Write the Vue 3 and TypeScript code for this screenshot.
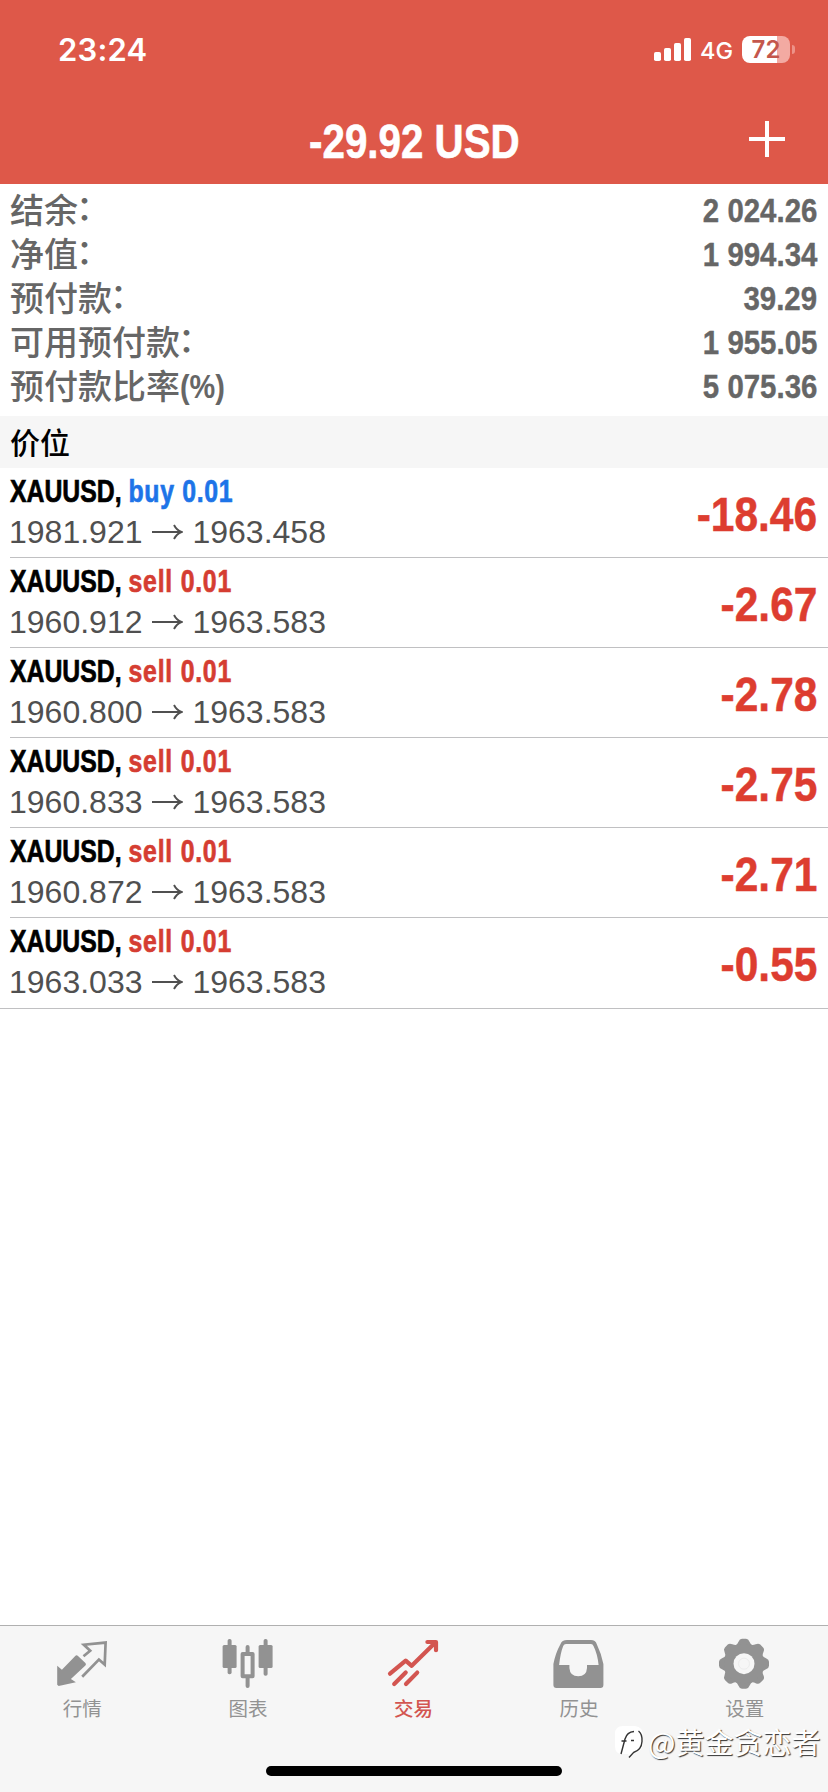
<script setup lang="ts">
interface Row { label: string; value: string; suffix?: string }
interface Position { side: 'buy' | 'sell'; open: string; current: string; profit: string }

const account: Row[] = [
  { label: '结余', suffix: '：', value: '2 024.26' },
  { label: '净值', suffix: '：', value: '1 994.34' },
  { label: '预付款', suffix: '：', value: '39.29' },
  { label: '可用预付款', suffix: '：', value: '1 955.05' },
  { label: '预付款比率', suffix: '(%)', value: '5 075.36' },
]

const positions: Position[] = [
  { side: 'buy', open: '1981.921', current: '1963.458', profit: '-18.46' },
  { side: 'sell', open: '1960.912', current: '1963.583', profit: '-2.67' },
  { side: 'sell', open: '1960.800', current: '1963.583', profit: '-2.78' },
  { side: 'sell', open: '1960.833', current: '1963.583', profit: '-2.75' },
  { side: 'sell', open: '1960.872', current: '1963.583', profit: '-2.71' },
  { side: 'sell', open: '1963.033', current: '1963.583', profit: '-0.55' },
]

const teeth = [0, 45, 90, 135, 180, 225, 270, 315]
</script>

<template>
  <div class="screen">
    <header class="top">
      <div class="status">
        <span class="time">23:24</span>
        <div class="indicators">
          <svg class="signal" width="38" height="24" viewBox="0 0 38 24" fill="#fff">
            <rect x="0" y="14" width="7" height="9" rx="1.8" />
            <rect x="10" y="10" width="7" height="13" rx="1.8" />
            <rect x="20" y="5" width="7" height="18" rx="1.8" />
            <rect x="30" y="0" width="7" height="23" rx="1.8" />
          </svg>
          <span class="network">4G</span>
          <div class="battery">72</div>
          <i class="cap"></i>
        </div>
      </div>
      <div class="bar">
        <h1 class="total">-29.92 USD</h1>
        <svg class="plus" width="36" height="36" viewBox="0 0 36 36" stroke="#fff" stroke-width="4">
          <path d="M0 18H36M18 0V36" />
        </svg>
      </div>
    </header>

    <section class="account">
      <div v-for="r in account" :key="r.label" class="line">
        <span class="label">{{ r.label }}<span :class="r.suffix === '：' ? 'colon' : 'suffix'">{{ r.suffix }}</span></span>
        <span class="value">{{ r.value }}</span>
      </div>
    </section>

    <h2 class="section">价位</h2>

    <ul class="positions">
      <li v-for="(p, i) in positions" :key="i" class="position">
        <div class="info">
          <div class="symbol">XAUUSD, <span :class="p.side">{{ p.side }} 0.01</span></div>
          <div class="prices">
            <span>{{ p.open }}</span>
            <svg class="arrow" width="32" height="16" viewBox="0 0 32 16" fill="none" stroke="#505050" stroke-width="1.9">
              <path d="M1 8H30M23 1Q25.500 6 30.500 8Q25.500 10 23 15" />
            </svg>
            <span>{{ p.current }}</span>
          </div>
        </div>
        <span class="profit">{{ p.profit }}</span>
      </li>
    </ul>

    <nav class="tabs">
      <div class="tab">
        <svg width="54" height="54" viewBox="0 0 54 54">
          <path fill="#929292" d="M1.2 29.7L5.9 33.7L19 20.3Q20.5 18.6 22 20L29.4 27Q30.6 28.2 29.4 29.4L14.9 43L19.9 46.3L2.7 50L1.2 48.7Z" />
          <path fill="none" stroke="#929292" stroke-width="2.7" d="M27.5 20.3L34.2 14.7L27.8 8.7L49.6 6.6L48.7 28.6L42.9 23.6L26.2 40.7" />
        </svg>
        <span>行情</span>
      </div>
      <div class="tab">
        <svg width="54" height="54" viewBox="0 0 54 54" fill="#929292">
          <rect x="1.6" y="9" width="14" height="23" rx="1.5" />
          <rect x="6.6" y="3" width="4" height="35.3" rx="1.8" />
          <rect x="21.6" y="18" width="10" height="22.3" fill="none" stroke="#929292" stroke-width="4" stroke-linejoin="round" />
          <path d="M26.6 11V17M26.6 41V50" stroke="#929292" stroke-width="4" stroke-linecap="round" />
          <rect x="37.6" y="9" width="14" height="23" rx="1.5" />
          <rect x="42.6" y="3" width="4" height="36.7" rx="1.8" />
        </svg>
        <span>图表</span>
      </div>
      <div class="tab active">
        <svg width="54" height="54" viewBox="0 0 54 54" fill="none" stroke="#d35550" stroke-width="4.2" stroke-linecap="round" stroke-linejoin="round">
          <path d="M3 37.7L18.7 24.6L24.7 29.8L48.6 6.3M40.4 6H49V14.2M7.2 48L18.7 36.6M19 48L30.2 36.6" />
        </svg>
        <span>交易</span>
      </div>
      <div class="tab">
        <svg width="54" height="54" viewBox="0 0 54 54">
          <path fill="#929292" fill-rule="evenodd" d="M14 4H38Q42.4 4 43.8 8.2Q48.5 18 50.4 28V49Q50.4 52 47.4 52H3.4Q.4 52 .4 49V28Q2.5 17 7.4 8.2Q9 4 14 4ZM13 8Q11 8 10.2 10Q7.4 17 6.1 29H16.4V32Q17 40.3 25.2 40.3Q33.5 40.3 34 32V29H45.6Q44.5 18 40.5 10Q39.8 8 38 8Z" />
        </svg>
        <span>历史</span>
      </div>
      <div class="tab">
        <svg width="54" height="54" viewBox="0 0 54 54">
          <g transform="translate(26 27.7)">
            <path v-for="a in teeth" :key="a" :transform="`rotate(${a})`" fill="#929292" d="M-9.500 -17.500Q-6.500 -19 -5.500 -22Q-4.400 -25 -2 -25H2Q4.400 -25 5.500 -22Q6.500 -19 9.500 -17.500V-8H-9.500Z" />
            <circle r="15" fill="none" stroke="#929292" stroke-width="9" />
            <circle r="10.5" fill="#f6f6f6" />
            <circle r="5.5" fill="none" stroke="#ececec" stroke-width="1" />
          </g>
        </svg>
        <span>设置</span>
      </div>
      <i class="home"></i>
    </nav>

    <div class="watermark">
      <svg width="34" height="34" viewBox="0 0 34 34" fill="none">
        <path d="M9 0H21Q29 1 29 9V18Q28 26 20 27L16 32L14 28H8Q1 28 1 20V8Q1 0 9 0Z" fill="#fff" />
        <path d="M7 28L11 13Q13 6 20 5.500M7.500 15H12.500M17 14.500H20M24.500 5Q28.500 8 28 15.500Q27.500 24 19.500 26.500L15 31.500" stroke="#333" stroke-width="1.400" />
      </svg>
      <span>@黄金贪恋者</span>
    </div>
  </div>
</template>

<style>
body { margin: 0; background: #fff; }
</style>

<style scoped>
.screen {
  position: relative;
  display: flex;
  flex-direction: column;
  width: 828px;
  height: 1792px;
  overflow: hidden;
  background: #fff;
  font-family: "Liberation Sans", "Noto Sans CJK SC", sans-serif;
}
.top { height: 184px; background: #de5849; color: #fff; flex: none; }
.status {
  display: flex;
  justify-content: space-between;
  align-items: center;
  height: 99px;
  padding: 0 33px 0 58px;
  font-family: Inter, sans-serif;
}
.time { font-size: 31px; font-weight: 600; letter-spacing: .2px; }
.indicators { display: flex; align-items: center; }
.network { margin-left: 8px; width: 42px; font-size: 23.5px; font-weight: 500; line-height: 30px; padding-top: 3px; }
.battery {
  width: 48px;
  height: 27px;
  border-radius: 8px;
  background: linear-gradient(90deg, #fff 35px, #f3aaa2 35px);
  color: #c4574c;
  font-size: 24px;
  font-weight: 600;
  line-height: 27px;
  text-align: center;
}
.cap { width: 3px; height: 9px; margin-left: 2px; border-radius: 0 5px 5px 0; background: #ed9288; }
.bar {
  display: grid;
  grid-template-columns: 1fr auto 1fr;
  align-items: center;
  height: 85px;
}
.total {
  grid-column: 2;
  margin: 0;
  font-size: 48px;
  line-height: 85px;
  transform: scaleX(.84);
  -webkit-text-stroke: .6px #fff;
}
.plus { justify-self: end; margin: -5px 43px 0 0; }
.account { height: 232px; padding: 3px 11px 0 10px; box-sizing: border-box; color: #666; flex: none; }
.line { display: flex; justify-content: space-between; height: 44px; line-height: 44px; }
.label { font: 500 34px/44px "Noto Sans CJK SC", sans-serif; }
.colon { display: inline-block; transform: translate(-2px, -3px); }
.suffix {
  display: inline-block;
  font: 700 34px/40px "Liberation Sans", sans-serif;
  transform: translateY(-1px) scaleX(.85);
  transform-origin: left;
}
.value {
  padding-top: 1px;
  font-size: 34px;
  font-weight: 700;
  transform: scaleX(.865);
  transform-origin: right;
  -webkit-text-stroke: .4px #666;
}
.section {
  flex: none;
  margin: 0;
  height: 51.5px;
  padding-left: 10px;
  background: #f6f6f6;
  color: #000;
  font: 500 30px/50px "Noto Sans CJK SC", sans-serif;
}
.positions { list-style: none; margin: 0; padding: 0; flex: 1; }
.position {
  display: flex;
  justify-content: space-between;
  height: 90px;
  margin-left: 10px;
  padding-right: 10.5px;
  box-sizing: border-box;
  border-bottom: 1px solid #c0c0c2;
}
.position:last-child { height: 91px; margin-left: 0; padding-left: 10px; }
.symbol {
  margin-top: 4px;
  height: 38px;
  color: #000;
  font-size: 32px;
  font-weight: 700;
  line-height: 38px;
  white-space: nowrap;
  transform: scaleX(.775);
  transform-origin: left;
  -webkit-text-stroke: .7px currentColor;
}
.buy { color: #1d74e8; letter-spacing: .9px; }
.sell { color: #d53d32; letter-spacing: 1px; }
.prices { display: flex; align-items: center; margin: 1px 0 0 -1px; color: #505050; font-size: 32px; line-height: 42px; }
.arrow { margin: 0 9px 0 9px; }
.profit {
  color: #dd3d30;
  font-size: 48px;
  font-weight: 700;
  line-height: 94px;
  transform: scaleX(.885);
  transform-origin: right;
  -webkit-text-stroke: .5px #dd3d30;
}
.tabs {
  position: relative;
  display: grid;
  grid-template-columns: repeat(5, 1fr);
  flex: none;
  height: 167px;
  border-top: 1px solid #b0b0b0;
  background: #f6f6f6;
  box-sizing: border-box;
}
.tab {
  display: flex;
  flex-direction: column;
  align-items: center;
  padding-top: 10px;
  color: #929292;
  font: 400 19.500px/28px "Noto Sans CJK SC", sans-serif;
}
.tab span { margin: 4px 1px 0 0; }
.tab.active { color: #d35550; font-weight: 500; }
.home { position: absolute; left: 266px; bottom: 16px; width: 296px; height: 10px; border-radius: 5px; background: #000; }
.watermark {
  position: absolute;
  left: 614px;
  top: 1726px;
  display: flex;
  align-items: center;
  color: #fff;
  font: 400 29px/32px "Noto Sans CJK SC", sans-serif;
  text-shadow: 1px 1px 1px #333;
}
.watermark span { margin-top: -5px; }
</style>
